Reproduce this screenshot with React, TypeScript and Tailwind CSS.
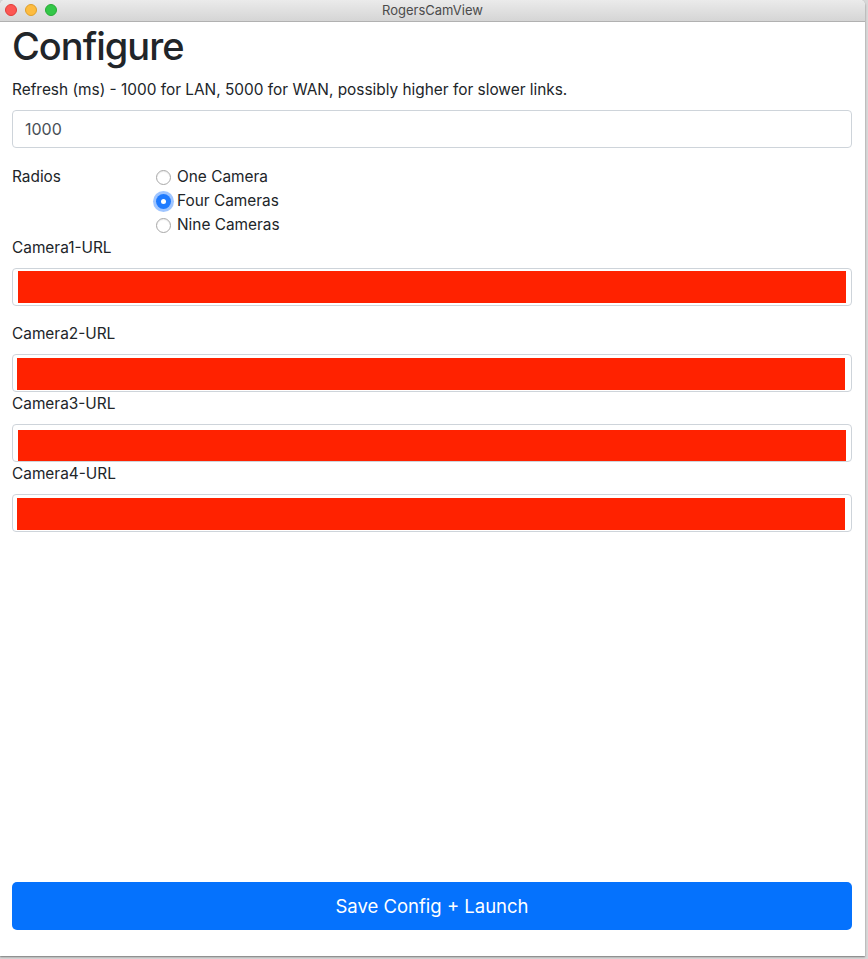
import React, { useState } from 'react';

const cameras = [
  { label: 'Camera1-URL', fill: 'ml-[5px] mr-[5px] mt-[2px] mb-[2px]', gap: 'mb-4' },
  { label: 'Camera2-URL', fill: 'ml-[4px] mr-[6px] mt-[3px] mb-[1px]', gap: '' },
  { label: 'Camera3-URL', fill: 'ml-[5px] mr-[5px] mt-[5px] mb-0', gap: '' },
  { label: 'Camera4-URL', fill: 'ml-[4px] mr-[6px] mt-[3px] mb-[1px]', gap: '' },
];

const radios = ['One Camera', 'Four Cameras', 'Nine Cameras'];

const Radio: React.FC<{ checked: boolean }> = ({ checked }) =>
  checked ? (
    <span className="w-[15px] h-[15px] rounded-full bg-[#1f7bff] flex items-center justify-center shadow-[0_0_0_3px_rgba(80,150,255,0.55)]">
      <span className="w-[5px] h-[5px] rounded-full bg-white" />
    </span>
  ) : (
    <span className="w-[15px] h-[15px] rounded-full bg-white border border-[#a8a8a8] shadow-[inset_0_1px_1px_rgba(0,0,0,0.08)]" />
  );

export default function App() {
  const [layout, setLayout] = useState(1);

  return (
    <div className="w-[868px] h-[959px] flex bg-[#d8d8d8] font-['Inter','Noto_Sans',sans-serif]">
      <div className="w-[865px] h-[956px] flex flex-col bg-white rounded-t-[5px] overflow-hidden shadow-[0_1px_2px_rgba(0,0,0,0.45)]">
        {/* title bar */}
        <div className="h-[22px] shrink-0 relative flex items-center justify-center bg-gradient-to-b from-[#ebebeb] to-[#d5d5d5] border-b border-[#b1b1b1]">
          <div className="absolute left-[5px] top-[4px] flex gap-[8px]">
            <span className="w-[12px] h-[12px] rounded-full bg-[#fc5753] border border-[#df3d39]" />
            <span className="w-[12px] h-[12px] rounded-full bg-[#fdbc40] border border-[#de9f29]" />
            <span className="w-[12px] h-[12px] rounded-full bg-[#33c748] border border-[#27aa35]" />
          </div>
          <span className="text-[13px] text-[#4b4b4b] leading-none font-['Inter',sans-serif]">RogersCamView</span>
        </div>

        <div className="flex-1 flex flex-col pl-3 pr-[13px] pb-[26px] text-[#212529] text-[15.4px]">
          <h1 className="text-[38px] leading-[48px] font-medium mb-2 tracking-[-1px]">Configure</h1>
          <p className="leading-6 mb-2">
            Refresh (ms) - 1000 for LAN, 5000 for WAN, possibly higher for slower links.
          </p>
          <div className="h-[38px] border border-[#ced4da] rounded-[4px] flex items-center px-3 text-[16px] text-[#495057] mb-4">
            1000
          </div>

          <div className="flex pt-px -mb-px">
            <div className="w-[144px] leading-6">Radios</div>
            <div className="flex flex-col">
              {radios.map((r, i) => (
                <label key={r} className="flex items-center h-6 gap-[6px] cursor-pointer" onClick={() => setLayout(i)}>
                  <Radio checked={layout === i} />
                  <span>{r}</span>
                </label>
              ))}
            </div>
          </div>

          {cameras.map((c) => (
            <div key={c.label} className={c.gap}>
              <div className="leading-6 mb-2">{c.label}</div>
              <div className="h-[38px] border border-[#ced4da] rounded-[4px] flex">
                <div className={`flex-1 bg-[#ff2200] ${c.fill}`} />
              </div>
            </div>
          ))}

          <button className="mt-auto h-12 w-full rounded-[5px] bg-[#0572fd] text-white text-[18.5px] leading-none">
            Save Config + Launch
          </button>
        </div>
      </div>
    </div>
  );
}
